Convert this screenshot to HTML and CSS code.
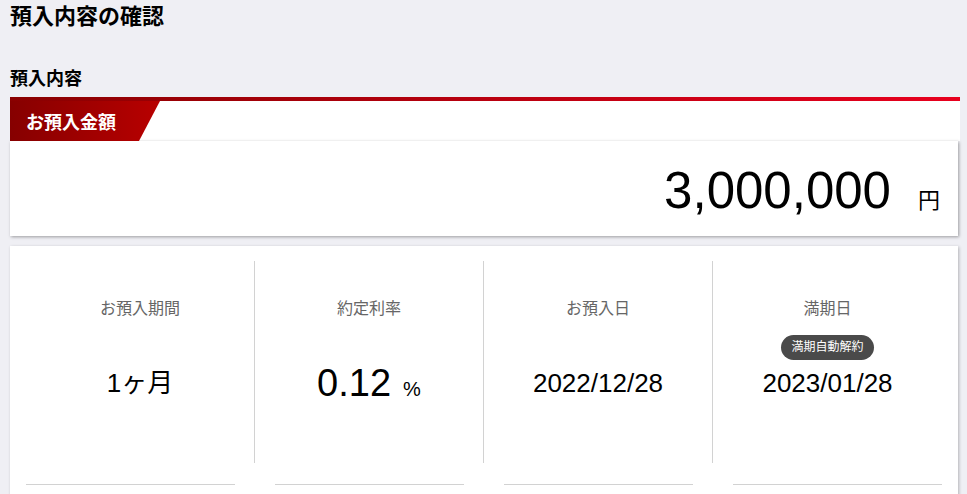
FILE: index.html
```html
<!DOCTYPE html>
<html lang="ja">
<head>
  <meta charset="UTF-8" />
  <meta name="viewport" content="width=device-width, initial-scale=1" />
  <title>預入内容の確認</title>
  <link rel="stylesheet" href="styles.css">
</head>
<body>
  <h1 class="page-title">預入内容の確認</h1>

  <h2 class="section-title">預入内容</h2>

  <section class="amount-card">
    <div class="amount-head">
      <span class="amount-tab">お預入金額</span>
    </div>
    <div class="amount-body">
      <span class="amount-value">3,000,000</span>
      <span class="amount-unit">円</span>
    </div>
  </section>

  <section class="detail-card">
    <div class="detail-grid">
      <div class="detail-item">
        <div class="detail-label">お預入期間</div>
        <div class="detail-badge-slot"></div>
        <div class="detail-value">1ヶ月</div>
      </div>
      <div class="detail-item">
        <div class="detail-label">約定利率</div>
        <div class="detail-badge-slot"></div>
        <div class="detail-value"><span class="rate-num">0.12</span><span class="rate-unit">%</span></div>
      </div>
      <div class="detail-item">
        <div class="detail-label">お預入日</div>
        <div class="detail-badge-slot"></div>
        <div class="detail-value">2022/12/28</div>
      </div>
      <div class="detail-item">
        <div class="detail-label">満期日</div>
        <div class="detail-badge-slot"><span class="badge">満期自動解約</span></div>
        <div class="detail-value">2023/01/28</div>
      </div>
    </div>
    <div class="detail-rules">
      <span class="rule"></span>
      <span class="rule"></span>
      <span class="rule"></span>
      <span class="rule"></span>
    </div>
  </section>
</body>
</html>
```

FILE: styles.css
```css
:root {
  --bg: #efeff4;
  --text: #000000;
  --label: #666666;
  --line: #d2d2d2;
  --badge: #4a4a4a;
}
body {
  margin: 0;
  padding: 0 7px 0 10px;
  background: var(--bg);
  color: var(--text);
  font-family: "Liberation Sans", "Noto Sans CJK JP", sans-serif;
}
.page-title {
  margin: 0;
  padding-top: 2px;
  font-size: 22px;
  line-height: 30px;
  font-weight: bold;
}
.section-title {
  margin: 34px 0 0;
  font-size: 18px;
  line-height: 26px;
  font-weight: bold;
}

/* amount card */
.amount-card {
  margin-top: 5px;
}
.amount-head {
  background: #fff;
  border-top: 4px solid transparent;
  border-image: linear-gradient(to right, #8a0000, #e8001e) 1;
  height: 40px;
}
.amount-tab {
  display: flex;
  align-items: center;
  box-sizing: border-box;
  width: 150px;
  height: 40px;
  padding-left: 16px;
  color: #fff;
  font-size: 18px;
  font-weight: bold;
  background: linear-gradient(to right, #860000, #b80000);
  clip-path: polygon(0 0, 100% 0, 86% 100%, 0 100%);
}
.amount-body {
  display: flex;
  justify-content: flex-end;
  align-items: baseline;
  box-sizing: border-box;
  height: 95px;
  margin-right: 2px;
  padding: 25px 18px 0;
  background: #fff;
  box-shadow: 1px 1px 3px rgba(0,0,0,0.35);
}
.amount-value {
  font-size: 51px;
  line-height: 50px;
}
.amount-unit {
  margin-left: 27px;
  font-size: 22px;
}

/* detail card */
.detail-card {
  margin: 10px 2px 0 0;
  padding: 15px 16px 20px;
  background: #fff;
  box-shadow: 1px 1px 3px rgba(0,0,0,0.25);
}
.detail-grid {
  display: grid;
  grid-template-columns: repeat(4, 1fr);
}
.detail-item {
  display: flex;
  flex-direction: column;
  align-items: center;
  height: 202px;
  padding-top: 36px;
  box-sizing: border-box;
  border-right: 1px solid var(--line);
}
.detail-item:last-child {
  border-right: none;
}
.detail-label {
  color: var(--label);
  font-size: 16px;
  line-height: 24px;
}
.detail-badge-slot {
  height: 25px;
  margin-top: 14px;
}
.badge {
  display: inline-block;
  height: 25px;
  padding: 0 10px;
  border-radius: 13px;
  background: var(--badge);
  color: #fff;
  font-size: 12px;
  line-height: 25px;
}
.detail-value {
  display: flex;
  align-items: baseline;
  margin-top: 3px;
  height: 40px;
  line-height: 40px;
  font-size: 26px;
}
.rate-num {
  font-size: 38px;
}
.rate-unit {
  margin-left: 12px;
  font-size: 20px;
}
.detail-rules {
  display: grid;
  grid-template-columns: repeat(4, 1fr);
  padding-top: 21px;
}
.rule {
  height: 0;
  margin: 0 20px;
  border-top: 1px solid var(--line);
}
.rule:first-child { margin-left: 0; }
.rule:last-child { margin-right: 0; }
```
